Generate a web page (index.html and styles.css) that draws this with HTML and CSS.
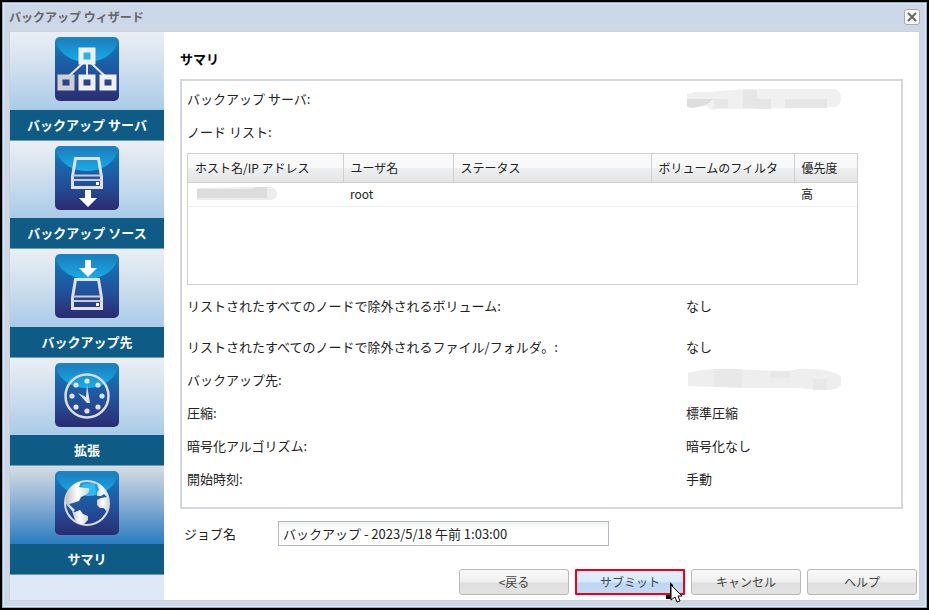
FILE: index.html
```html
<!DOCTYPE html>
<html lang="ja">
<head>
    <meta charset="UTF-8">
    <meta name="viewport" content="width=device-width, initial-scale=1.0">
    <title>バックアップ ウィザード</title>
    <link rel="stylesheet" href="styles.css">
</head>
<body>

<!-- shared gradients and the glossy tile behind every step icon -->
<svg class="defs" aria-hidden="true">
    <defs>
        <linearGradient id="tile" x1="0" y1="0" x2="0" y2="1">
            <stop offset="0" stop-color="#1a86c4"/>
            <stop offset="0.25" stop-color="#166bae"/>
            <stop offset="0.6" stop-color="#22509b"/>
            <stop offset="1" stop-color="#2b2b70"/>
        </linearGradient>
        <linearGradient id="gloss" x1="0" y1="0" x2="0" y2="1">
            <stop offset="0" stop-color="#1c80c0"/>
            <stop offset="1" stop-color="#16aeea"/>
        </linearGradient>
        <linearGradient id="metal" x1="0" y1="0" x2="1" y2="0">
            <stop offset="0" stop-color="#c4c4c8"/>
            <stop offset="0.5" stop-color="#ffffff"/>
            <stop offset="1" stop-color="#d4d4d8"/>
        </linearGradient>
        <symbol id="base" viewBox="0 0 64 64">
            <rect width="64" height="64" rx="5" fill="url(#tile)"/>
            <path d="M2 7q0-4 4-4h52q4 0 4 4C58 18 46 25 32 25S6 18 2 7z" fill="url(#gloss)"/>
        </symbol>
        <symbol id="disk" viewBox="0 0 32 32">
            <path d="M4.500 1.500h23l3 18v11h-29v-11z" fill="none" stroke="#e0e0e6" stroke-width="3"/>
            <path d="M2 18.500h28M2 23h28" stroke="#c9cad4" stroke-width="2"/>
            <rect x="25" y="25" width="3" height="3" fill="#fff"/>
        </symbol>
    </defs>
</svg>

<div class="window">
    <header class="titlebar">
        <h1>バックアップ ウィザード</h1>
        <button type="button" class="close" aria-label="閉じる">
            <svg viewBox="0 0 10 10"><path d="M1 1l8 8M9 1l-8 8"/></svg>
        </button>
    </header>

    <div class="body">
        <nav class="steps">
            <a href="#server" class="step">
                <span class="picture">
                    <svg viewBox="0 0 64 64">
                        <use href="#base"/>
                        <path d="M32 26v14M28 26L13 40M36 26l15 14" stroke="#e8e8ec" stroke-width="2" fill="none"/>
                        <g fill="none" stroke="#f0f0f2" stroke-width="5">
                            <rect x="26" y="13" width="12" height="12" fill="#1fb6ef"/>
                            <rect x="5" y="40" width="12" height="11" stroke="#cfcfd2"/>
                            <rect x="26" y="40" width="12" height="11"/>
                            <rect x="47" y="40" width="12" height="11"/>
                        </g>
                    </svg>
                </span>
                <span class="caption">バックアップ サーバ</span>
            </a>
            <a href="#source" class="step">
                <span class="picture">
                    <svg viewBox="0 0 64 64">
                        <use href="#base"/>
                        <use href="#disk" x="16" y="11" width="32" height="32"/>
                        <path d="M30 44h6v8h6l-9 9-9-9h6z" fill="#fff"/>
                    </svg>
                </span>
                <span class="caption">バックアップ ソース</span>
            </a>
            <a href="#destination" class="step">
                <span class="picture">
                    <svg viewBox="0 0 64 64">
                        <use href="#base"/>
                        <use href="#disk" x="16" y="24" width="32" height="32"/>
                        <path d="M30 6h6v8h6l-9 9-9-9h6z" fill="#fff"/>
                    </svg>
                </span>
                <span class="caption">バックアップ先</span>
            </a>
            <a href="#advanced" class="step">
                <span class="picture">
                    <svg viewBox="0 0 64 64">
                        <use href="#base"/>
                        <circle cx="32" cy="33" r="21.500" fill="none" stroke="#dcdce0" stroke-width="2.500"/>
                        <g fill="#e2e2e6">
                            <circle cx="32" cy="18" r="2.600"/><circle cx="43" cy="22" r="2.600"/>
                            <circle cx="47" cy="33" r="2.600"/><circle cx="43" cy="44" r="2.600"/>
                            <circle cx="32" cy="48" r="2.600"/><circle cx="21" cy="44" r="2.600"/>
                            <circle cx="17" cy="33" r="2.600"/><circle cx="21" cy="22" r="2.600"/>
                            <path d="M32 22l3 18h-3l-9-10 8 4z"/>
                        </g>
                    </svg>
                </span>
                <span class="caption">拡張</span>
            </a>
            <a href="#summary" class="step current" aria-current="step">
                <span class="picture">
                    <svg viewBox="0 0 64 64">
                        <use href="#base"/>
                        <path d="M28 13l12-1 1 12-8 1-8-4z" fill="#2fb9f5"/>
                        <circle cx="32" cy="32" r="22" fill="none" stroke="#d8d8dc" stroke-width="2"/>
                        <g fill="url(#metal)">
                            <path d="M11 29C12 19 18 12 26 11l-2 5 5 1 5 0q1 4-2 6l-6 3-2 4-6 2-4 1 6 6-2 2-7-8z"/>
                            <path d="M17 40l3 1 5-2 3 4 5 2 0 4-4 4-5 0-4-4z"/>
                            <path d="M41 11c8 4 13 12 13 21 0 3-1 6-3 8l-2-3-4 0-3-3 0-5 4-2 6-1-3-3-3 2-4 0 0-4 2-2z"/>
                        </g>
                    </svg>
                </span>
                <span class="caption">サマリ</span>
            </a>
        </nav>

        <main class="content">
            <h2>サマリ</h2>

            <section class="summary">
                <div class="row">
                    <span>バックアップ サーバ:</span>
                    <svg class="redacted" viewBox="0 0 156 24">
                        <path d="M1 7q8-3 20-2l40-3h88q6 2 6 9t-5 9l-76 2H31q-6 3-10-3l-14 2-6-2z" fill="#f0f0f0"/>
                        <path d="M1 12h27l-7 5-14 4-6-1z" fill="#dedede"/>
                        <path d="M28 12h14v9H28zM57 3h14v9H57zM57 12h14v9H57zM71 12h14v10H71zM99 12h42v9H99z" fill="#e6e6e6"/>
                    </svg>
                </div>
                <div class="row">
                    <span>ノード リスト:</span>
                </div>

                <div class="grid">
                    <table>
                        <thead>
                            <tr>
                                <th class="host">ホスト名/IP アドレス</th>
                                <th class="user">ユーザ名</th>
                                <th>ステータス</th>
                                <th class="filter">ボリュームのフィルタ</th>
                                <th class="priority">優先度</th>
                            </tr>
                        </thead>
                        <tbody>
                            <tr>
                                <td>
                                    <svg class="redacted-host" viewBox="0 0 84 16">
                                        <path d="M2 2l54-1h20q6 2 6 7t-6 6H2z" fill="#ededed"/>
                                        <path d="M2 3h54l6-2h10v11H2z" fill="#dcdcdc"/>
                                    </svg>
                                </td>
                                <td>root</td>
                                <td></td>
                                <td></td>
                                <td>高</td>
                            </tr>
                        </tbody>
                    </table>
                </div>

                <div class="row volumes">
                    <span>リストされたすべてのノードで除外されるボリューム:</span>
                    <span>なし</span>
                </div>
                <div class="row files">
                    <span>リストされたすべてのノードで除外されるファイル/フォルダ。:</span>
                    <span>なし</span>
                </div>
                <div class="row">
                    <span>バックアップ先:</span>
                    <svg class="redacted" viewBox="0 0 156 24">
                        <path d="M2 5q14-4 34-4l66 2q10-3 24-2 20 0 29 8v8q-4 5-14 5l-31-2H56L2 18z" fill="#eeeeee"/>
                        <path d="M28 1h28v18H28zM127 11h14v11h-14zM85 3h18v7H85z" fill="#e8e8e8"/>
                    </svg>
                </div>
                <div class="row">
                    <span>圧縮:</span>
                    <span>標準圧縮</span>
                </div>
                <div class="row">
                    <span>暗号化アルゴリズム:</span>
                    <span>暗号化なし</span>
                </div>
                <div class="row">
                    <span>開始時刻:</span>
                    <span>手動</span>
                </div>
            </section>

            <div class="job">
                <label for="jobName">ジョブ名</label>
                <input type="text" id="jobName" name="jobName" value="バックアップ - 2023/5/18 午前 1:03:00">
            </div>

            <footer class="buttons">
                <button type="button">&lt;戻る</button>
                <button type="button" class="submit">サブミット
                    <svg class="cursor" viewBox="0 0 18 22" aria-hidden="true">
                        <path d="M5 0v13H1v4h7V3z" fill="#000"/>
                        <path d="M6 3v15l4-3 2 5 3-1-2-5h4z" fill="#fff" stroke="#000"/>
                    </svg>
                </button>
                <button type="button">キャンセル</button>
                <button type="button">ヘルプ</button>
            </footer>
        </main>
    </div>
</div>

</body>
</html>
```
FILE: styles.css
```css
* {
    box-sizing: border-box;
}
body {
    margin: 0;
    padding: 2px;
    min-height: 100vh;
    display: flex;
    background-color: #000;
    color: #222;
    font-family: "Noto Sans CJK JP", sans-serif;
    font-size: 13px;
    line-height: 20px;
}
h1, h2 {
    margin: 0;
}
button, input {
    font-family: inherit;
    color: inherit;
}
.defs {
    position: absolute;
    width: 0;
    height: 0;
}
.window {
    flex: 1;
    display: flex;
    flex-direction: column;
    padding: 0 6px 6px;
    background-color: #ccd8e8;
    border: 1px solid #94a9c4;
    box-shadow: inset 0 0 0 1px #e0e8f2;
}
.titlebar {
    display: flex;
    align-items: center;
    justify-content: space-between;
    height: 28px;
}
.titlebar h1 {
    font-size: 12px;
    color: #666;
}
.close {
    display: flex;
    width: 16px;
    height: 16px;
    padding: 2px;
    background-color: #f6f6f6;
    border: 1px solid #aaa;
    border-radius: 3px;
}
.close svg {
    width: 10px;
    height: 10px;
    stroke: #666;
    stroke-width: 2;
}
.body {
    flex: 1;
    display: flex;
    background-color: #fff;
    border: 1px solid #cdd0d4;
}

/* left side steps */
.steps {
    width: 154px;
    flex: none;
    display: flex;
    flex-direction: column;
    padding-bottom: 25px;
    background-color: #dfe8f6;
}
.step {
    flex: 1;
    display: flex;
    flex-direction: column;
    color: #fff;
    font-weight: bold;
    text-align: center;
    text-decoration: none;
}
.picture {
    flex: 1;
    padding-top: 5px;
    background: linear-gradient(#ebeff4, #d4e1ee 40%, #a9cbe8);
}
.current .picture {
    background: linear-gradient(#d6dde4, #8fb2d4 45%, #2a7cc0);
}
.picture svg {
    display: block;
    width: 64px;
    height: 64px;
    margin: 0 auto;
}
.caption {
    height: 31px;
    line-height: 30px;
    background-color: #0e5c86;
    border-bottom: 1px solid #6d9ab4;
}

/* summary page */
.content {
    flex: 1;
    display: flex;
    flex-direction: column;
    padding: 17px 2px 5px 16px;
}
.content h2 {
    font-size: 13px;
    color: #000;
    margin-bottom: 10px;
}
.summary {
    flex: 1;
    margin-right: 14px;
    padding: 1px 43px 0 5px;
    border: 2px solid #d3d6e3;
}
.row {
    display: flex;
    align-items: center;
    height: 33px;
}
.row.volumes {
    margin-top: 4px;
}
.row.files {
    margin-top: 8px;
}
.row span:first-child {
    width: 499px;
}
.redacted {
    width: 156px;
    height: 24px;
}
.grid {
    height: 132px;
    margin-top: 5px;
    border: 1px solid #d0d0d0;
}
.grid table {
    width: 100%;
    table-layout: fixed;
    border-collapse: collapse;
    font-size: 12px;
}
.grid th {
    height: 28px;
    padding: 0 0 0 7px;
    text-align: left;
    font-weight: normal;
    background: linear-gradient(#f9f9f9 50%, #eeeff1 50%, #e4e5e7);
    border-right: 1px solid #d0d0d0;
    border-bottom: 1px solid #d0d0d0;
}
.grid th:last-child {
    border-right: none;
}
.grid td {
    height: 24px;
    padding: 0 0 0 7px;
    border-bottom: 1px solid #ededed;
}
.host {
    width: 155px;
}
.user {
    width: 110px;
}
.filter {
    width: 143px;
}
.priority {
    width: 63px;
}
.redacted-host {
    display: block;
    width: 84px;
    height: 16px;
}
.job {
    display: flex;
    align-items: center;
    margin-top: 12px;
    padding-left: 4px;
}
.job label {
    width: 94px;
}
.job input {
    width: 331px;
    height: 25px;
    padding: 0 4px;
    font-size: 13px;
    background: linear-gradient(#edf0f0, #fff 8px);
    border: 1px solid #b5b8c8;
}
.buttons {
    display: flex;
    justify-content: flex-end;
    gap: 6px;
    margin-top: 23px;
}
.buttons button {
    position: relative;
    width: 110px;
    height: 26px;
    padding: 0;
    font-size: 12px;
    line-height: 20px;
    color: #444;
    background: linear-gradient(#fafafa, #efefef 50%, #dfdfdf 54%, #e3e3e3);
    border: 1px solid #b8b8b8;
    border-radius: 3px;
}
.buttons .submit {
    background: linear-gradient(#e2f0fd, #d6eafc 50%, #bdd6f2 54%, #c3daf5);
    border: 2px solid #f00018;
    border-radius: 1px;
}
.cursor {
    position: absolute;
    left: 88px;
    top: 11px;
    width: 18px;
    height: 22px;
}
```
